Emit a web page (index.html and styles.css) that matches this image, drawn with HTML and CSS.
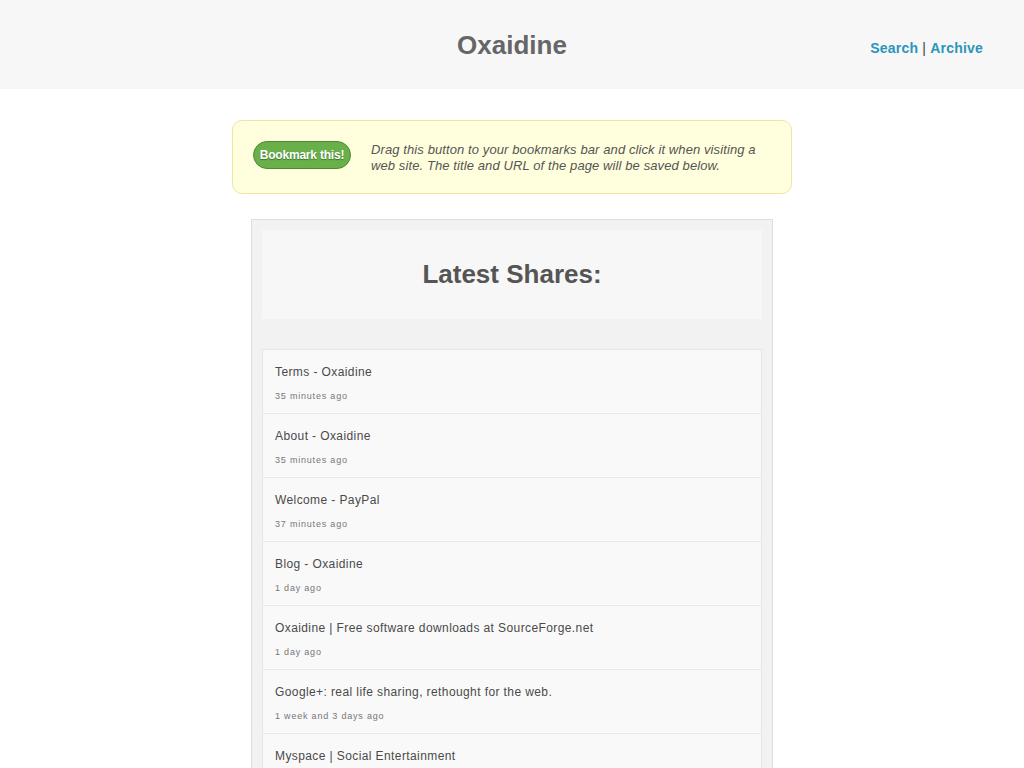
FILE: index.html
```html
<!DOCTYPE html>
<html lang="en">
<head>
	<meta charset="UTF-8">
	<title>Oxaidine</title>
	<link rel="stylesheet" href="styles.css">
</head>
<body>
	<div class="header">
		<h1 class="logo">Oxaidine</h1>
		<div class="nav">
			<a href="#">Search</a> | <a href="#">Archive</a>
		</div>
	</div>

	<div class="bookmarklet">
		<a class="bm-btn" href="#">Bookmark this!</a>
		<p>Drag this button to your bookmarks bar and click it when visiting a web site. The title and URL of the page will be saved below.</p>
	</div>

	<div class="panel">
		<div class="panel-head">
			<h2>Latest Shares:</h2>
		</div>
		<ul class="shares">
			<li><a href="#">Terms - Oxaidine</a><span>35 minutes ago</span></li>
			<li><a href="#">About - Oxaidine</a><span>35 minutes ago</span></li>
			<li><a href="#">Welcome - PayPal</a><span>37 minutes ago</span></li>
			<li><a href="#">Blog - Oxaidine</a><span>1 day ago</span></li>
			<li><a href="#">Oxaidine | Free software downloads at SourceForge.net</a><span>1 day ago</span></li>
			<li><a href="#">Google+: real life sharing, rethought for the web.</a><span>1 week and 3 days ago</span></li>
			<li><a href="#">Myspace | Social Entertainment</a><span>1 week and 3 days ago</span></li>
			<li><a href="#">Oxaidine</a><span>2 weeks ago</span></li>
		</ul>
	</div>
</body>
</html>
```
FILE: styles.css
```css
*{
	margin: 0;
	padding: 0;
}
body{
	background: #fff;
	font-family: "Liberation Sans", Arial, sans-serif;
	color: #555;
}
a{
	text-decoration: none;
}
.header{
	height: 89px;
	background: #f7f7f7;
	position: relative;
	display: flex;
	align-items: center;
	justify-content: center;
}
.header .logo{
	font-size: 26px;
	font-weight: bold;
	color: #666;
	margin-top: 1px;
}
.header .nav{
	position: absolute;
	right: 41px;
	top: 40px;
	font-size: 14px;
	color: #444;
	letter-spacing: 0.2px;
}
.header .nav a{
	color: #2b95bb;
	font-weight: bold;
}
.bookmarklet{
	width: 558px;
	height: 52px;
	margin: 31px auto 0;
	padding-top: 20px;
	background: #ffffdd;
	border: 1px solid #ebe6a3;
	border-radius: 10px;
	display: flex;
	align-items: flex-start;
}
.bookmarklet .bm-btn{
	display: block;
	width: 96px;
	height: 26px;
	margin-left: 20px;
	line-height: 26px;
	text-align: center;
	background: #69b04b;
	border: 1px solid #4e8a36;
	border-radius: 14px;
	color: #fff;
	font-size: 12px;
	font-weight: bold;
	text-shadow: 0 1px 1px #3e6e2a;
	letter-spacing: -0.2px;
}
.bookmarklet p{
	margin: 1px 0 0 20px;
	width: 400px;
	font-size: 13px;
	line-height: 16px;
	font-style: italic;
	color: #555;
	letter-spacing: 0.1px;
}
.panel{
	width: 500px;
	margin: 25px auto 0;
	padding: 10px;
	background: #f2f2f2;
	border: 1px solid #dedede;
}
.panel-head{
	height: 89px;
	background: #f7f7f7;
	display: flex;
	align-items: center;
	justify-content: center;
}
.panel-head h2{
	font-size: 26px;
	font-weight: bold;
	color: #555;
}
.shares{
	list-style: none;
	margin-top: 30px;
	border: 1px solid #e6e6e6;
	background: #f9f9f9;
}
.shares li{
	height: 63px;
	border-top: 1px solid #e8e8e8;
	padding-left: 12px;
	display: flex;
	flex-direction: column;
}
.shares li:first-child{
	border-top: 0;
}
.shares li a{
	display: block;
	margin-top: 14px;
	font-size: 12px;
	line-height: 16px;
	color: #4a4a4a;
	letter-spacing: 0.4px;
}
.shares li span{
	display: block;
	margin-top: 10px;
	font-size: 9px;
	line-height: 12px;
	color: #777;
	letter-spacing: 0.8px;
}
```
